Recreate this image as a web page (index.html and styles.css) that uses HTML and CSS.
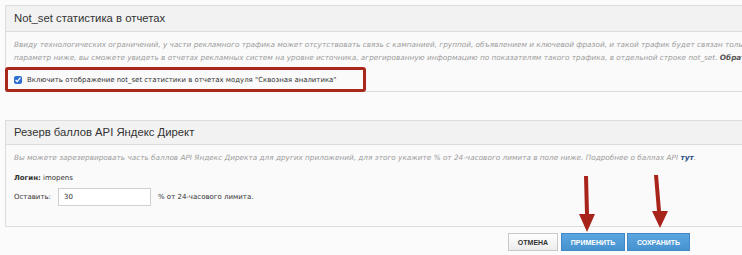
FILE: index.html
```html
<!DOCTYPE html>
<html lang="ru">

<head>
    <meta charset="UTF-8">
    <meta name="viewport" content="width=device-width, initial-scale=1.0">
    <title>Настройки</title>
    <link rel="stylesheet" href="styles.css">
</head>

<body>
    <div class="page">
        <!-- Not_set -->
        <div class="panel">
            <div class="panel-head">Not_set статистика в отчетах</div>
            <div class="panel-body">
                <p class="hint">Ввиду технологических ограничений, у части рекламного трафика может отсутствовать связь с кампанией, группой, объявлением и ключевой фразой, и такой трафик будет связан только с источником. Включив<br>параметр ниже, вы сможете увидеть в отчетах рекламных систем на уровне источника, агрегированную информацию по показателям такого трафика, в отдельной строке not_set. <b>Обратите внимание</b></p>
                <label class="check-row">
                    <input type="checkbox" checked>
                    <span>Включить отображение not_set статистики в отчетах модуля "Сквозная аналитика"</span>
                </label>
            </div>
        </div>

        <!-- API points -->
        <div class="panel panel-api">
            <div class="panel-head">Резерв баллов API Яндекс Директ</div>
            <div class="panel-body">
                <p class="hint">Вы можете зарезервировать часть баллов API Яндекс Директа для других приложений, для этого укажите % от 24-часового лимита в поле ниже. Подробнее о баллах API <a href="#">тут</a>.</p>
                <div class="login"><b>Логин:</b> imopens</div>
                <div class="field-row">
                    <span>Оставить:</span>
                    <input type="text" class="field" value="30">
                    <span>% от 24-часового лимита.</span>
                </div>
            </div>
        </div>

        <div class="actions">
            <button class="btn btn-cancel">Отмена</button>
            <button class="btn btn-blue btn-apply">Применить</button>
            <button class="btn btn-blue btn-save">Сохранить</button>
        </div>

        <!-- annotation arrows -->
        <svg class="marks" width="742" height="255" viewBox="0 0 742 255">
            <polygon points="584,176 588,176 589,214 595,214 587,232 579,214 585,214" />
            <polygon points="654,175 658,175 661,211 668,211 660,228 652,211 657,211" />
        </svg>
    </div>
</body>

</html>
```

FILE: styles.css
```css
/* General */
body {
    margin: 0;
    padding: 0;
    background-color: #fbfbfb;
    color: #333;
    font-family: 'DejaVu Sans', Verdana, sans-serif;
}

.page {
    position: relative;
    height: 255px;
    padding: 5px 0 0 5px;
    overflow: hidden;
    box-sizing: border-box;
}

/* Panels */
.panel {
    border: 1px solid #dcdcdc;
    background-color: #fafafa;
    margin-right: -60px;
}

.panel-head {
    height: 25px;
    line-height: 25px;
    padding-left: 8px;
    background-color: #f2f2f2;
    border-bottom: 1px solid #dcdcdc;
    font-family: 'Liberation Sans', Arial, sans-serif;
    font-size: 11.3px;
    color: #333;
}

.panel-body {
    padding: 6px 8px 0;
}

.hint {
    margin: 0;
    font-size: 7.3px;
    line-height: 13px;
    font-style: italic;
    color: #9d9d9d;
    white-space: nowrap;
}

.hint b {
    color: #555;
}

.hint a {
    color: #2d4f86;
    font-weight: bold;
    text-decoration: none;
}

/* red highlight around the option */
.check-row {
    display: flex;
    align-items: center;
    gap: 5px;
    box-sizing: border-box;
    width: 361px;
    height: 25px;
    margin: 3px 0 -1px -9px;
    padding-left: 6px;
    border: 3px solid #a9281c;
    border-radius: 3px;
    font-size: 6.95px;
    color: #333;
}

.check-row input {
    width: 8px;
    height: 8px;
    margin: 0;
    accent-color: #2f6fd0;
}

.panel-api {
    margin-top: 28px;
}

.panel-api .panel-head {
    height: 23px;
    line-height: 23px;
}

.panel-api .panel-body {
    padding-bottom: 20px;
}

.login {
    margin-top: 8px;
    font-size: 7px;
    line-height: 13px;
}

.field-row {
    display: flex;
    align-items: center;
    gap: 7px;
    margin-top: 3px;
    font-size: 7px;
}

.field {
    width: 93px;
    height: 18px;
    box-sizing: border-box;
    border: 1px solid #cfcfcf;
    background-color: #fff;
    padding: 0 5px;
    font-family: 'DejaVu Sans', Verdana, sans-serif;
    font-size: 7px;
    color: #333;
}

/* Buttons */
.actions {
    display: flex;
    justify-content: flex-end;
    gap: 2px;
    padding: 6px 52px 0 0;
}

.btn {
    box-sizing: border-box;
    height: 18px;
    padding: 0;
    border: 1px solid #c8c8c8;
    background: linear-gradient(#ffffff, #ececec);
    font-family: 'Liberation Sans', Arial, sans-serif;
    font-size: 7px;
    font-weight: bold;
    text-transform: uppercase;
    color: #333;
    cursor: pointer;
}

.btn-cancel {
    width: 50px;
    margin-right: 1px;
}

.btn-apply {
    width: 64px;
}

.btn-save {
    width: 63px;
}

.btn-blue {
    border-color: #4288c6;
    background: linear-gradient(#5ba6df, #4793d0);
    color: #fff;
}

/* Arrows */
.marks {
    position: absolute;
    top: 0;
    left: 0;
    pointer-events: none;
}

.marks polygon {
    fill: #a8231a;
}
```
